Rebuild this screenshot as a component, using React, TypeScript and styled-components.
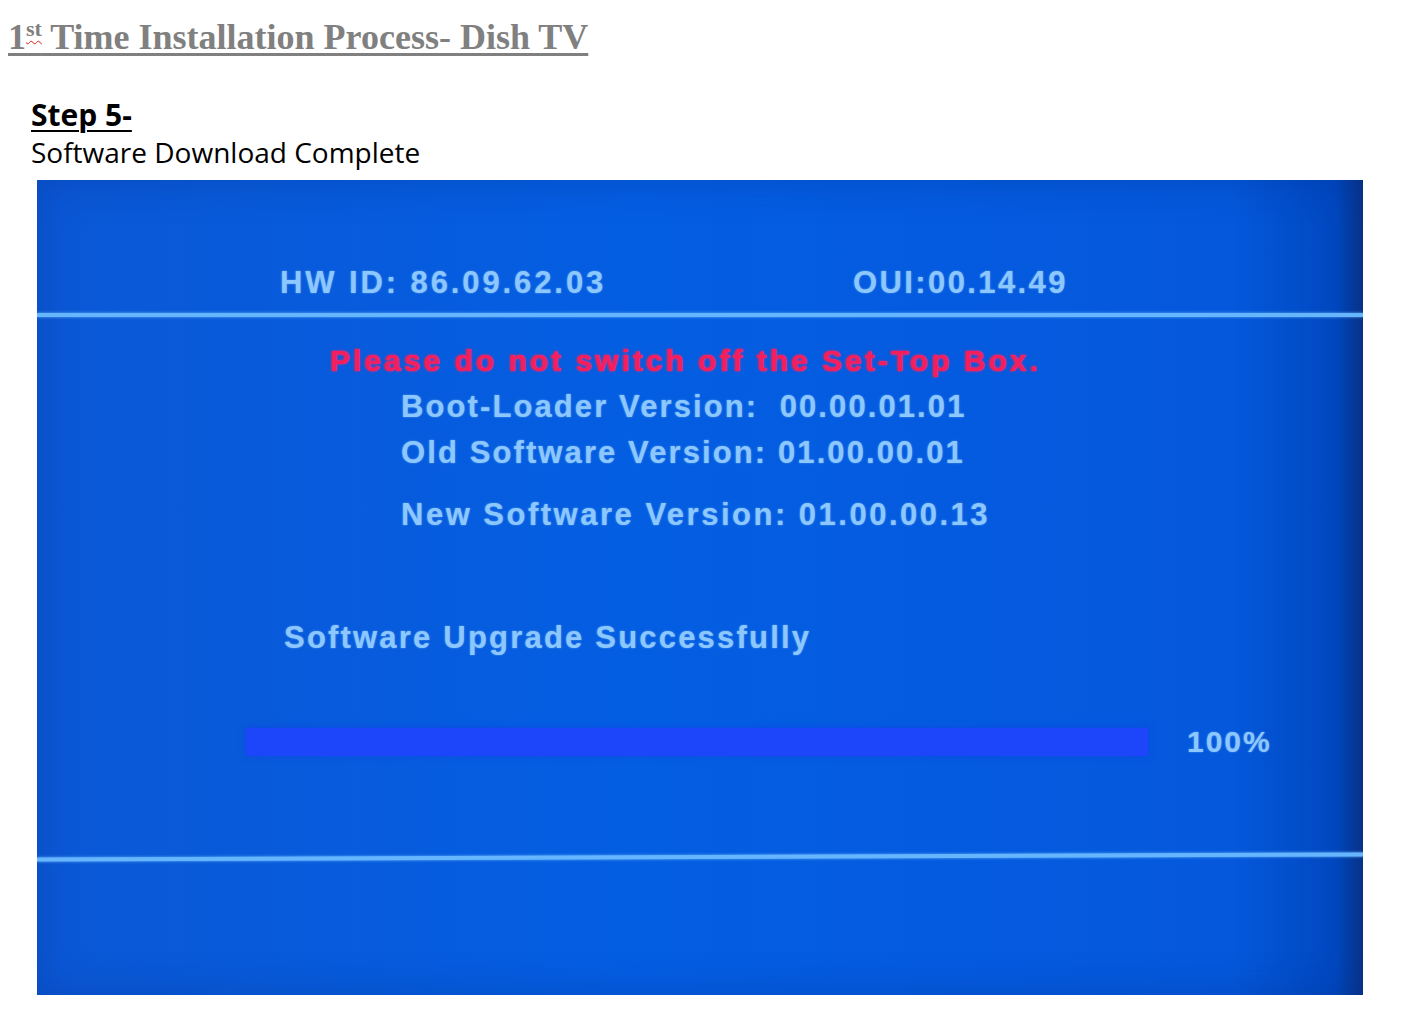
import React from "react";
import styled, { createGlobalStyle } from "styled-components";

const GlobalStyle = createGlobalStyle`
  html, body {
    margin: 0;
    padding: 0;
    background: #ffffff;
  }
`;

const versions = [
  { label: "Boot-Loader Version:", value: "00.00.01.01", gap: true },
  { label: "Old Software Version:", value: "01.00.00.01", gap: false },
];

const App: React.FC = () => {
  return (
    <>
      <GlobalStyle />
      <Page>
        <Titulo>
          1<Sup>st</Sup> Time Installation Process- Dish TV
        </Titulo>
        <Secao>
          <Passo>Step 5-</Passo>
          <Descricao>Software Download Complete</Descricao>
        </Secao>

        <Tela>
          <InfoRow>
            <InfoText>HW ID: 86.09.62.03</InfoText>
            <InfoText $spacing={2.4}>OUI:00.14.49</InfoText>
          </InfoRow>
          <Linha />

          <Mensagens>
            <Aviso>Please do not switch off the Set-Top Box.</Aviso>
            {versions.map((v) => (
              <Versao key={v.label}>
                {v.label}
                {v.gap ? "\u00a0\u00a0" : " "}
                {v.value}
              </Versao>
            ))}
            <Versao $top={16} $spacing={2.5}>
              New Software Version: 01.00.00.13
            </Versao>
          </Mensagens>

          <Sucesso>Software Upgrade Successfully</Sucesso>

          <ProgressoRow>
            <Barra>
              <Preenchido style={{ width: "100%" }} />
            </Barra>
            <Percentual>100%</Percentual>
          </ProgressoRow>

          <LinhaInferior />
        </Tela>
      </Page>
    </>
  );
};
export default App;

const Page = styled.div`
  padding: 17px 8px 0 8px;
  width: 1427px;
  box-sizing: border-box;
`;

const Titulo = styled.div`
  display: inline-block;
  font-family: "Liberation Serif", "Times New Roman", serif;
  font-weight: 700;
  font-size: 36px;
  line-height: 40px;
  color: #808080;
  text-decoration: underline;
  text-decoration-thickness: 3px;
  text-underline-offset: 4px;
`;

const Sup = styled.span`
  font-size: 22px;
  vertical-align: 13px;
  line-height: 0;
  text-decoration: underline wavy #e02020;
  text-decoration-thickness: 1px;
`;

const Secao = styled.div`
  margin-top: 40px;
  padding-left: 23px;
  font-family: "Open Sans", "Noto Sans", sans-serif;
  color: #000;
`;

const Passo = styled.div`
  font-weight: 700;
  font-size: 30px;
  line-height: 36px;
  text-decoration: underline;
  text-decoration-thickness: 2px;
  text-underline-offset: 4px;
`;

const Descricao = styled.div`
  font-size: 28px;
  line-height: 38px;
`;

const Tela = styled.div`
  margin: 9px 0 0 29px;
  width: 1326px;
  height: 815px;
  background: linear-gradient(
    90deg,
    #0b58d6 0%,
    #045ee2 45%,
    #0558dc 90%,
    #0048c0 98%,
    #08358c 100%
  );
  box-shadow: inset 0 0 40px rgba(0, 30, 110, 0.25);
  display: flex;
  flex-direction: column;
  overflow: hidden;
`;

const tvText = `
  font-family: "Liberation Sans", Arial, sans-serif;
  font-weight: 700;
  color: #8cc8ff;
  text-shadow: 0 0 2px rgba(150, 210, 255, 0.6);
`;

const InfoRow = styled.div`
  height: 133px;
  box-sizing: border-box;
  display: grid;
  grid-template-columns: 573px auto;
  align-items: end;
  padding: 0 0 13px 243px;
`;

const InfoText = styled.span<{ $spacing?: number }>`
  ${tvText}
  font-size: 31px;
  line-height: 34px;
  letter-spacing: ${(p) => p.$spacing ?? 2.9}px;
`;

const Linha = styled.div`
  height: 4px;
  background: #66b6ff;
  box-shadow: 0 0 3px rgba(120, 200, 255, 0.8);
`;

const Mensagens = styled.div`
  margin-top: 21px;
  padding-left: 293px;
  display: flex;
  flex-direction: column;
`;

const Aviso = styled.div`
  font-family: "Liberation Sans", Arial, sans-serif;
  font-weight: 900;
  font-size: 30px;
  line-height: 46px;
  letter-spacing: 3px;
  color: #f41e5c;
  text-shadow: 0 0 3px rgba(255, 40, 110, 0.9), 0 0 1px #ff2a66;
`;

const Versao = styled.div<{ $top?: number; $spacing?: number }>`
  ${tvText}
  margin: ${(p) => p.$top ?? 0}px 0 0 71px;
  font-size: 31px;
  line-height: 46px;
  letter-spacing: ${(p) => p.$spacing ?? 2.1}px;
`;

const Sucesso = styled.div`
  ${tvText}
  margin: 77px 0 0 247px;
  font-size: 31px;
  line-height: 46px;
  letter-spacing: 2.2px;
`;

const ProgressoRow = styled.div`
  margin: 66px 0 0 209px;
  display: flex;
  align-items: center;
  gap: 39px;
`;

const Barra = styled.div`
  width: 902px;
  height: 28px;
  background: #0c4ae8;
  box-shadow: 0 0 6px rgba(20, 60, 240, 0.6);
`;

const Preenchido = styled.div`
  height: 100%;
  background: #1d46fa;
`;

const Percentual = styled.span`
  ${tvText}
  font-size: 30px;
  line-height: 30px;
  letter-spacing: 2px;
`;

const LinhaInferior = styled.div`
  margin-top: 98px;
  height: 4px;
  background: #66b6ff;
  box-shadow: 0 0 3px rgba(120, 200, 255, 0.8);
  transform: rotate(-0.22deg);
`;
